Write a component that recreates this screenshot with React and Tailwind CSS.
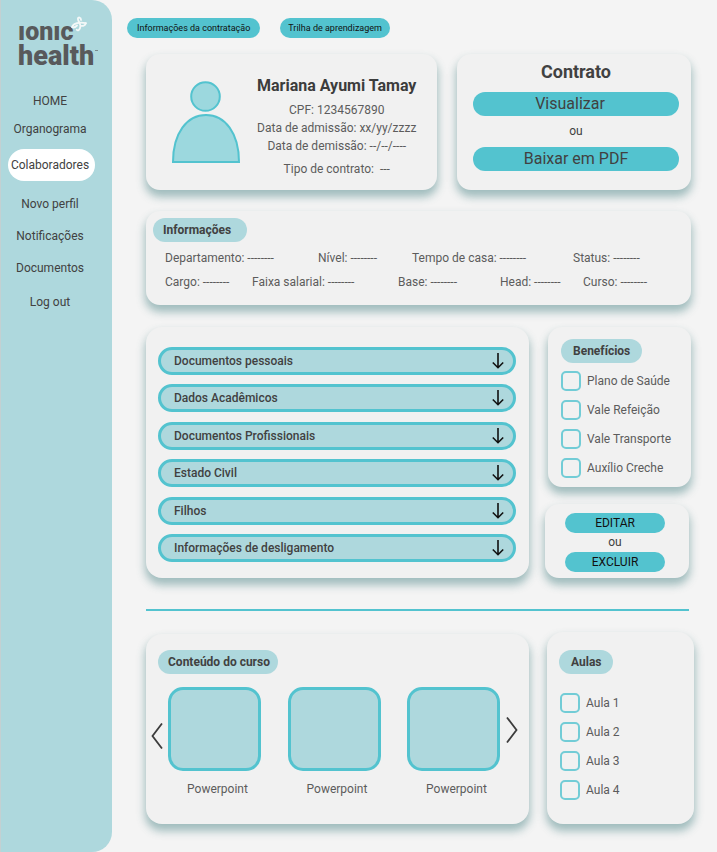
import React from 'react';

const card =
  'bg-[#f1f1f1] shadow-[0_6px_8px_1px_rgba(45,112,114,0.42)]';

function Logo() {
  return (
    <div className="relative ml-[17px] mt-[19px] w-[80px] text-[#58595b]">
      <div className="text-[27px] font-black leading-6">
        <span className="text-[25px]">ıonıc</span>
        <br />
        health
      </div>
      <svg className="absolute -top-[3px] left-[53px] h-[16px] w-[16px]" viewBox="0 0 16 16" fill="none" stroke="#f4f8f8" strokeWidth="1.8" strokeLinecap="round">
        <path d="M10 4C10.200 1 6.800 .800 6.900 3C7 5.500 9.800 7.500 9.300 11C8.900 14 6.800 15.200 5.800 13.800" />
        <path d="M1.200 11C2 7.500 8.500 5.500 14.800 7.200" />
        <path d="M14.800 7.200C14.300 9.300 12 10.200 10.500 9.800" />
        <path d="M1.200 11C2.500 12 4.500 11 6 9.500" />
      </svg>
      <svg className="absolute left-[77px] top-[31px] h-[2px] w-[3px]" viewBox="0 0 3 2" fill="#58595b">
        <rect width="3" height="1" opacity="0.6" />
      </svg>
    </div>
  );
}

function SideLink({ children, className = 'h-8' }) {
  return (
    <a href="#" className={`flex items-center justify-center pr-[3px] text-xs ${className}`}>
      {children}
    </a>
  );
}

function Tag({ children, className = 'px-3' }) {
  return (
    <h2 className={`flex h-6 w-fit items-center rounded-full bg-[#aed8dd] text-xs font-bold text-[#414141] ${className}`}>
      {children}
    </h2>
  );
}

function CheckList({ items }) {
  return (
    <ul className="flex flex-col gap-[9px]">
      {items.map((item) => (
        <li key={item}>
          <label className="flex h-5 items-center gap-[6px] text-xs whitespace-nowrap">
            <input type="checkbox" className="size-5 shrink-0 appearance-none rounded-[5px] border-2 border-[#53c3cf]/80 checked:bg-[#53c3cf]" />
            {item}
          </label>
        </li>
      ))}
    </ul>
  );
}

function DownArrow() {
  return (
    <svg className="h-[16px] w-[12px]" viewBox="0 0 12 16" fill="none" stroke="#111" strokeWidth="1.6">
      <path d="M6 0V14.500M.800 9.500L6 14.700L11.200 9.500" />
    </svg>
  );
}

function Chevron({ d, label, className }) {
  return (
    <button type="button" aria-label={label} className={className}>
      <svg className="h-[26px] w-[12px]" viewBox="0 0 12 26" fill="none" stroke="#3c3c3c" strokeWidth="1.8">
        <path d={d} />
      </svg>
    </button>
  );
}

const sections = [
  'Documentos pessoais',
  'Dados Acadêmicos',
  'Documentos Profissionais',
  'Estado Civil',
  'Filhos',
  'Informações de desligamento',
];

export default function App() {
  return (
    <div className="flex min-h-screen bg-[#f4f4f4] font-['Roboto',sans-serif] text-xs text-[#5c5c5c]">
      <aside className="w-[112px] shrink-0 rounded-r-[20px] border-l border-[#c3d0d2] bg-[#aed8dd] text-[#414141]">
        <Logo />
        <nav className="mt-[19px] flex flex-col pl-[7px] pr-[17px]">
          <SideLink className="h-7">HOME</SideLink>
          <SideLink className="h-7">Organograma</SideLink>
          <SideLink className="mb-[7px] mt-[6px] h-8 rounded-full bg-white">Colaboradores</SideLink>
          <SideLink>Novo perfil</SideLink>
          <SideLink>Notificações</SideLink>
          <SideLink>Documentos</SideLink>
          <SideLink className="h-9">Log out</SideLink>
        </nav>
      </aside>

      <div className="min-w-0 flex-1 pb-7 pr-[26px] pt-[18px]">
        <nav className="flex gap-5 pl-[15px] text-[9px] text-[#111]">
          <a href="#" className="flex h-5 items-center rounded-full bg-[#53c3cf] px-[10px]">Informações da contratação</a>
          <a href="#" className="flex h-5 items-center rounded-full bg-[#53c3cf] px-2">Trilha de aprendizagem</a>
        </nav>

        <main className="pl-[34px] pt-4">
          <div className="flex gap-5">
            <section className={`flex flex-1 gap-4 rounded-[14px] pl-[26px] ${card}`}>
              <svg className="mt-[27px] h-[83px] w-[69px] shrink-0" viewBox="0 0 69 83" fill="#9cd8de" stroke="#53c3cf" strokeWidth="2">
                <circle cx="33.500" cy="15.500" r="14.300" />
                <path d="M1 81C1 52 15 34 34 34C53 34 67 52 67 81Z" />
              </svg>
              <div className="flex flex-col items-center whitespace-nowrap pt-[21px] leading-[18px]">
                <h1 className="mb-1 text-base font-bold leading-[22px] text-[#3c3c3c]">Mariana Ayumi Tamay</h1>
                <p>CPF: 1234567890</p>
                <p>Data de admissão: xx/yy/zzzz</p>
                <p className="mb-[5px]">Data de demissão: --/--/----</p>
                <p>Tipo de contrato: &nbsp;---</p>
              </div>
            </section>
            <section className={`flex w-[234px] flex-col items-center rounded-[14px] pb-[19px] pl-4 pr-3 pt-[6px] text-base text-[#414141] ${card}`}>
              <h2 className="text-lg font-bold leading-6">Contrato</h2>
              <button type="button" className="mt-2 h-6 w-full rounded-full bg-[#53c3cf] pr-3">Visualizar</button>
              <span className="py-[6px] text-xs leading-[19px]">ou</span>
              <button type="button" className="h-6 w-full rounded-full bg-[#53c3cf]">Baixar em PDF</button>
            </section>
          </div>

          <section className={`mt-[21px] h-[94px] rounded-[14px] pt-[7px] ${card}`}>
            <div className="pl-[7px]"><Tag className="pl-[10px] pr-4">Informações</Tag></div>
            <div className="mt-1 grid grid-cols-[153px_94px_161px_1fr] whitespace-nowrap pl-[19px] leading-6">
              <span>Departamento: --------</span>
              <span>Nível: --------</span>
              <span>Tempo de casa: --------</span>
              <span>Status: --------</span>
            </div>
            <div className="grid grid-cols-[87px_146px_102px_83px_1fr] whitespace-nowrap pl-[19px] leading-6">
              <span>Cargo: --------</span>
              <span>Faixa salarial: --------</span>
              <span>Base: --------</span>
              <span>Head: --------</span>
              <span>Curso: --------</span>
            </div>
          </section>

          <div className="mt-[22px] flex gap-4">
            <section className={`flex flex-1 flex-col justify-between rounded-[16px] pb-4 pl-3 pr-[13px] pt-5 ${card}`}>
              {sections.map((name) => (
                <button key={name} type="button" className="flex h-7 items-center justify-between rounded-full border-[3px] border-[#53c3cf] bg-[#aed8dd] pl-[13px] pr-[9px] font-medium text-[#414141]">
                  {name}
                  <DownArrow />
                </button>
              ))}
            </section>
            <div className="flex w-[146px] flex-col gap-[17px]">
              <section className={`ml-[3px] h-[160px] rounded-[14px] pl-[13px] pt-3 ${card}`}>
                <Tag>Benefícios</Tag>
                <div className="mt-2">
                  <CheckList items={['Plano de Saúde', 'Vale Refeição', 'Vale Transporte', 'Auxílio Creche']} />
                </div>
              </section>
              <section className={`mr-[2px] h-[74px] rounded-[14px] pl-5 pt-[9px] ${card}`}>
                <div className="flex w-[100px] flex-col text-center text-[#111]">
                  <button type="button" className="h-5 rounded-full bg-[#53c3cf]">EDITAR</button>
                  <span className="leading-[19px] text-[#414141]">ou</span>
                  <button type="button" className="h-5 rounded-full bg-[#53c3cf]">EXCLUIR</button>
                </div>
              </section>
            </div>
          </div>

          <hr className="mr-[2px] mt-[31px] border-t-2 border-[#53c3cf]" />

          <div className="-mr-[3px] mt-[21px] flex items-end gap-[18px]">
            <section className={`h-[190px] flex-1 rounded-[16px] pt-4 ${card}`}>
              <div className="pl-3"><Tag className="pl-[10px] pr-2">Conteúdo do curso</Tag></div>
              <div className="mt-[13px] flex items-start pl-[5px] pr-[11px]">
                <Chevron label="Anterior" d="M11 .500L1.500 13L11 25.500" className="mt-9" />
                <div className="ml-[5px] mr-[6px] flex flex-1 justify-between">
                  {[1, 2, 3].map((n) => (
                    <figure key={n}>
                      <div className="h-[84px] w-[93px] rounded-[15px] border-[3px] border-[#53c3cf] bg-[#aed8dd]" />
                      <figcaption className="mt-[9px] pl-[6px] text-center leading-[18px]">Powerpoint</figcaption>
                    </figure>
                  ))}
                </div>
                <Chevron label="Próximo" d="M1 .500L10.500 13L1 25.500" className="mt-[30px]" />
              </div>
            </section>
            <section className={`h-[192px] w-[147px] rounded-[16px] pl-3 pt-[18px] ${card}`}>
              <Tag>Aulas</Tag>
              <div className="mt-[19px] pl-px">
                <CheckList items={['Aula 1', 'Aula 2', 'Aula 3', 'Aula 4']} />
              </div>
            </section>
          </div>
        </main>
      </div>
    </div>
  );
}
